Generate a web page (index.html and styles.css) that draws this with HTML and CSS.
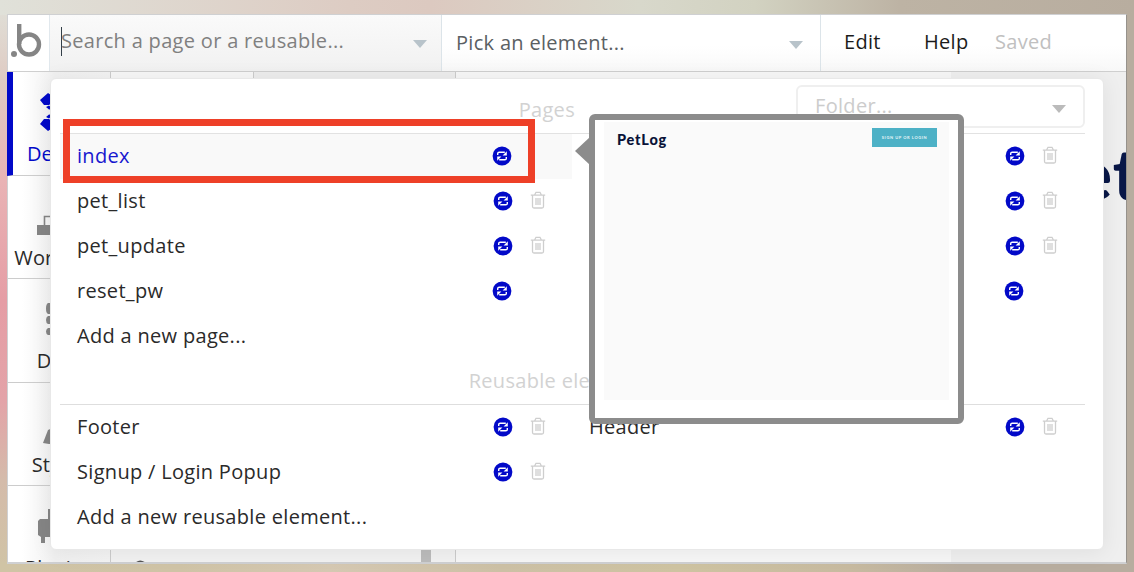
FILE: index.html
```
<!DOCTYPE html>
<html lang="en">
<head>
<meta charset="utf-8">
<title>Page picker</title>
<link rel="stylesheet" href="styles.css">
</head>
<body>
<svg class="defs" aria-hidden="true">
  <symbol id="refresh" viewBox="0 0 20 20">
    <circle cx="10" cy="10" r="9.4" fill="#0209c8"/>
    <path d="M5.7 9V7.6Q5.7 6.2 7.200 6.2H12.8M14.3 11V12.4Q14.3 13.8 12.8 13.800H7.2" fill="none" stroke="#fff" stroke-width="1.4"/>
    <path d="M14.8 5.300V9.5H10.6ZM5.2 14.700V10.5H9.4Z" fill="#fff"/>
  </symbol>
  <symbol id="trash" viewBox="0 0 16 18">
    <path d="M.8 4.2H15.2M4.6 4 6 1.3H10L11.4 4M2.5 4.5V15.5Q2.5 17 4 17H12Q13.5 17 13.5 15.5V4.5M6 7V14M8 7V14M10 7V14" fill="none" stroke="#cecece" stroke-width="1.3"/>
  </symbol>
</svg>
<div class="window">
  <header class="topbar">
    <div class="logo">
      <svg width="41" height="56" viewBox="0 0 41 56"><circle cx="6" cy="39" r="3" fill="#858585"/><path d="M11.2 9V29" stroke="#858585" stroke-width="4.400" fill="none"/><circle cx="21" cy="29.500" r="10" fill="none" stroke="#858585" stroke-width="4.400"/></svg>
    </div>
    <div class="field search"><i class="caret"></i><span class="label">Search a page or a reusable...</span><i class="arrow"></i></div>
    <div class="field element"><span class="label">Pick an element...</span><i class="arrow"></i></div>
    <nav class="menu"><span class="edit">Edit</span><span class="help">Help</span><span class="saved">Saved</span></nav>
  </header>
  <div class="workspace">
    <aside class="sidebar">
      <div class="tab active"><svg viewBox="0 0 44 44"><path d="M11 3 3 10 7 15 12 15 20 9ZM11 41 3 34 7 29 12 29 20 35ZM9 17 12 15.500 16 19 12 19.500ZM9 27 12 28.500 16 25 12 24.500Z" fill="#0209c8"/></svg><span>Design</span></div>
      <div class="tab"><svg viewBox="0 0 44 44"><path d="M0 31H22V41H0Z" fill="#858585"/><path d="M7.500 31V22.500H28" stroke="#858585" stroke-width="1.6" fill="none"/></svg><span>Workflow</span></div>
      <div class="tab"><svg viewBox="0 0 44 44"><path d="M11 6H30V17H11Q9 16 9 11.500T11 6ZM11 19H30V27H11Q9 26 9 23T11 19ZM11 31H30V38H11Q9 37 9 34.500T11 31Z" fill="#858585"/></svg><span>Data</span></div>
      <div class="tab"><svg viewBox="0 0 44 44"><path d="M11 29 20 25V43H12L6 42Z" fill="#858585"/></svg><span>Styles</span></div>
      <div class="tab"><svg viewBox="0 0 44 44"><path d="M11 5H16V15H28V33H8V39H4V33L1 31V17L3 15H11Z" fill="#858585"/></svg><span>Plugins</span></div>
    </aside>
    <section class="tools"><div class="tool-tabs"><i></i></div><div class="tool-row"><svg width="60" height="12" viewBox="0 0 60 12"><path d="M1 12Q6 7 12 12M40 11H43V13H40ZM49 11H52V13H49Z" fill="#555"/></svg></div><i class="thumb"></i></section>
    <section class="canvas"><div class="page"></div><div class="hero">et</div></section>
  </div>
</div>

<main class="panel">
  <div class="panel-head"><h2>Pages</h2><div class="folder"><span>Folder...</span><i class="arrow"></i></div></div>
  <div class="columns">
    <div class="column">
      <div class="row selected"><span>index</span><svg class="refresh"><use href="#refresh"/></svg></div>
      <div class="row"><span>pet_list</span><svg class="refresh"><use href="#refresh"/></svg><svg class="trash"><use href="#trash"/></svg></div>
      <div class="row"><span>pet_update</span><svg class="refresh"><use href="#refresh"/></svg><svg class="trash"><use href="#trash"/></svg></div>
      <div class="row"><span>reset_pw</span><svg class="refresh"><use href="#refresh"/></svg></div>
      <div class="row"><span>Add a new page...</span></div>
    </div>
    <div class="column">
      <div class="row"><span></span><svg class="refresh"><use href="#refresh"/></svg><svg class="trash"><use href="#trash"/></svg></div>
      <div class="row"><span></span><svg class="refresh"><use href="#refresh"/></svg><svg class="trash"><use href="#trash"/></svg></div>
      <div class="row"><span></span><svg class="refresh"><use href="#refresh"/></svg><svg class="trash"><use href="#trash"/></svg></div>
      <div class="row"><span></span><svg class="refresh"><use href="#refresh"/></svg></div>
    </div>
  </div>
  <h2 class="reusable">Reusable elements</h2>
  <div class="columns">
    <div class="column">
      <div class="row"><span>Footer</span><svg class="refresh"><use href="#refresh"/></svg><svg class="trash"><use href="#trash"/></svg></div>
      <div class="row"><span>Signup / Login Popup</span><svg class="refresh"><use href="#refresh"/></svg><svg class="trash"><use href="#trash"/></svg></div>
      <div class="row"><span>Add a new reusable element...</span></div>
    </div>
    <div class="column">
      <div class="row"><span>Header</span><svg class="refresh"><use href="#refresh"/></svg><svg class="trash"><use href="#trash"/></svg></div>
    </div>
  </div>
</main>

<div class="preview">
  <svg class="pointer" viewBox="0 0 15 28"><path d="M15 0V28L0 14Z" fill="#8c8c8c"/></svg>
  <div class="thumbnail"><strong>PetLog</strong><span class="signup">SIGN UP OR LOGIN</span></div>
</div>
<div class="highlight"></div>
</body>
</html>
```
FILE: styles.css
```
* { box-sizing: border-box; }
body {
  margin: 0;
  width: 1134px;
  height: 572px;
  overflow: hidden;
  padding: 14px 7px 8px;
  font: 20px/28px "Open Sans", "Noto Sans", sans-serif;
  letter-spacing: .31px;
  color: #2a2a2a;
  background:
    linear-gradient(90deg, #e0e1d9 0, #ddccc3 350px, #dcc9c0 430px, #d8d8cb 640px, #d2d2c1 755px, #bdb3a4 900px, #b8ad9f 100%) 0 0 / 100% 15px no-repeat,
    linear-gradient(90deg, #d0c4a5 0, #cfc3a6 180px, #d5c8b2 330px, #ccc0a5 500px, #cec3a1 680px, #c7baa0 850px, #b8ad9f 960px, #b8ad9f 100%) 0 100% / 100% 10px no-repeat,
    linear-gradient(#e0e1d9, #dfcbc3 80px, #e9b3b5 180px, #e59da5 300px, #e3a3a8 400px, #d4bbaa 480px, #d0c4a5) 0 0 / 8px 100% no-repeat,
    #b8ad9f;
}
h2 { margin: 0; font-size: 20px; font-weight: 400; color: #d2d2d2; }
i { display: block; }
.defs { position: absolute; width: 0; height: 0; }
.window {
  height: 550px;
  border: 1px solid #cfd0d2;
  border-left: 0;
  border-right-color: #96928c;
  border-bottom-width: 2px;
  background: #fff;
  overflow: hidden;
}
.topbar {
  display: flex;
  height: 57px;
  border-bottom: 1px solid #cfcfcf;
  background: linear-gradient(#fff 55%, #f8f8f8);
}
.logo { width: 43px; border-left: 1px solid #cfd0d2; border-right: 1px solid #e1e8ed; background: #fff; }
.logo svg { display: block; }
.field { display: flex; align-items: center; justify-content: space-between; border-right: 1px solid #dce4e9; }
.search { width: 392px; padding: 0 14px 4px 11px; color: #808080; background: linear-gradient(#fafafa, #f1f1f1); }
.search .label { flex: 1; margin-left: -1px; }
.caret { width: 1px; height: 29px; background: #333f48; }
.element { width: 379px; padding: 0 17px 1px 14px; color: #5a6063; }
.arrow { border: 7px solid transparent; border-top: 8px solid #b8c3ca; border-bottom: 0; }
.search .arrow, .element .arrow { margin-top: 5px; }
.menu { display: flex; padding: 13px 0 0 23px; color: #1b1b1b; }
.edit { width: 80px; }
.help { width: 71px; }
.saved { color: #c0c0c0; }
.workspace { display: flex; height: 491px; }
.sidebar { width: 104px; flex: none; border-right: 1px solid #ccc; background: linear-gradient(90deg, #fff 15px, #f0f0f0 48px, #f3f3f3); }
.tab { height: 103.5px; padding-top: 18px; border-left: 1px solid #cfd0d2; border-bottom: 1px solid #ccc; display: flex; flex-direction: column; align-items: center; }
.tab svg { width: 44px; height: 44px; overflow: visible; flex: none; }
.tab span { margin-top: 6px; letter-spacing: .1px; }
.active { border-left: 6px solid #0209c8; padding-right: 5px; color: #0209c8; }
.tools { display: grid; grid-template: 474px 17px / 1fr 34px; width: 345px; flex: none; border-right: 1px solid #ccc; background: #f2f2f2; }
.tool-tabs { grid-column: 1 / 3; background: #ededed; }
.tool-tabs i { width: 143px; height: 8px; border-right: 1px solid #ccc; background: #f7f7f7; }
.tool-row { padding-left: 23px; }
.tool-row svg { display: block; margin-top: 5px; }
.thumb { width: 10px; height: 17px; background: #bcbcbc; }
.canvas { display: flex; flex: 1; background: #efefef; position: relative; }
.page { width: 495px; background: #f7f7f7; }
.hero { position: absolute; left: 618px; top: 57px; font: 900 71px/88px Lato, sans-serif; letter-spacing: 1px; color: #091747; }
.panel {
  position: absolute;
  left: 50px;
  top: 78px;
  width: 1054px;
  height: 472px;
  padding: 0 18px 0 9px;
  border: 1px solid #e8e8e8;
  border-radius: 6px;
  background: #fff;
  box-shadow: 0 2px 22px rgba(0, 0, 0, .07);
}
.panel-head { display: flex; align-items: center; justify-content: flex-end; height: 55px; border-bottom: 1px solid #e2e2e2; }
.panel-head h2 { margin: 8px 221px 0 0; }
.folder { display: flex; align-items: center; justify-content: space-between; width: 289px; height: 43px; padding: 0 17px; border: 2px solid #efefef; border-radius: 6px; color: #ccc; }
.folder .arrow { border-top-color: #bbb; margin-top: 5px; }
.columns { display: grid; grid-template-columns: 512px 512px; }
.row { display: flex; align-items: center; height: 45px; padding: 0 25px 2px 17px; }
.row span { flex: 1; white-space: nowrap; }
.row .refresh { width: 20px; height: 20px; margin-right: 35px; flex: none; }
.row .trash { width: 16px; height: 18px; margin: -1px 1px 0 -18px; flex: none; }
.selected { background: #f9f9f9; color: #1717cf; }
.reusable { display: flex; justify-content: center; height: 46px; padding: 8px 26px 0 0; border-bottom: 1px solid #dedede; }
.preview {
  position: absolute;
  left: 589px;
  top: 114px;
  width: 375px;
  height: 310px;
  padding: 2px 9px;
  border: 6px solid #8c8c8c;
  border-radius: 6px;
  background: #fff;
}
.pointer { position: absolute; left: -20px; top: 16px; width: 15px; height: 30px; }
.thumbnail { display: flex; justify-content: space-between; align-items: flex-start; height: 278px; padding: 6px 12px 0 13px; background: #fafafa; }
.thumbnail strong { font: 900 14.5px/23px Lato, sans-serif; letter-spacing: .8px; color: #091238; }
.signup { width: 65px; height: 19px; background: #4db1c6; color: #e7f5f8; font: 700 4px/20px Lato, sans-serif; letter-spacing: .6px; text-align: center; white-space: nowrap; }
.highlight { position: absolute; left: 63px; top: 119px; width: 472px; height: 64px; border: 7px solid #ee4028; }
```
